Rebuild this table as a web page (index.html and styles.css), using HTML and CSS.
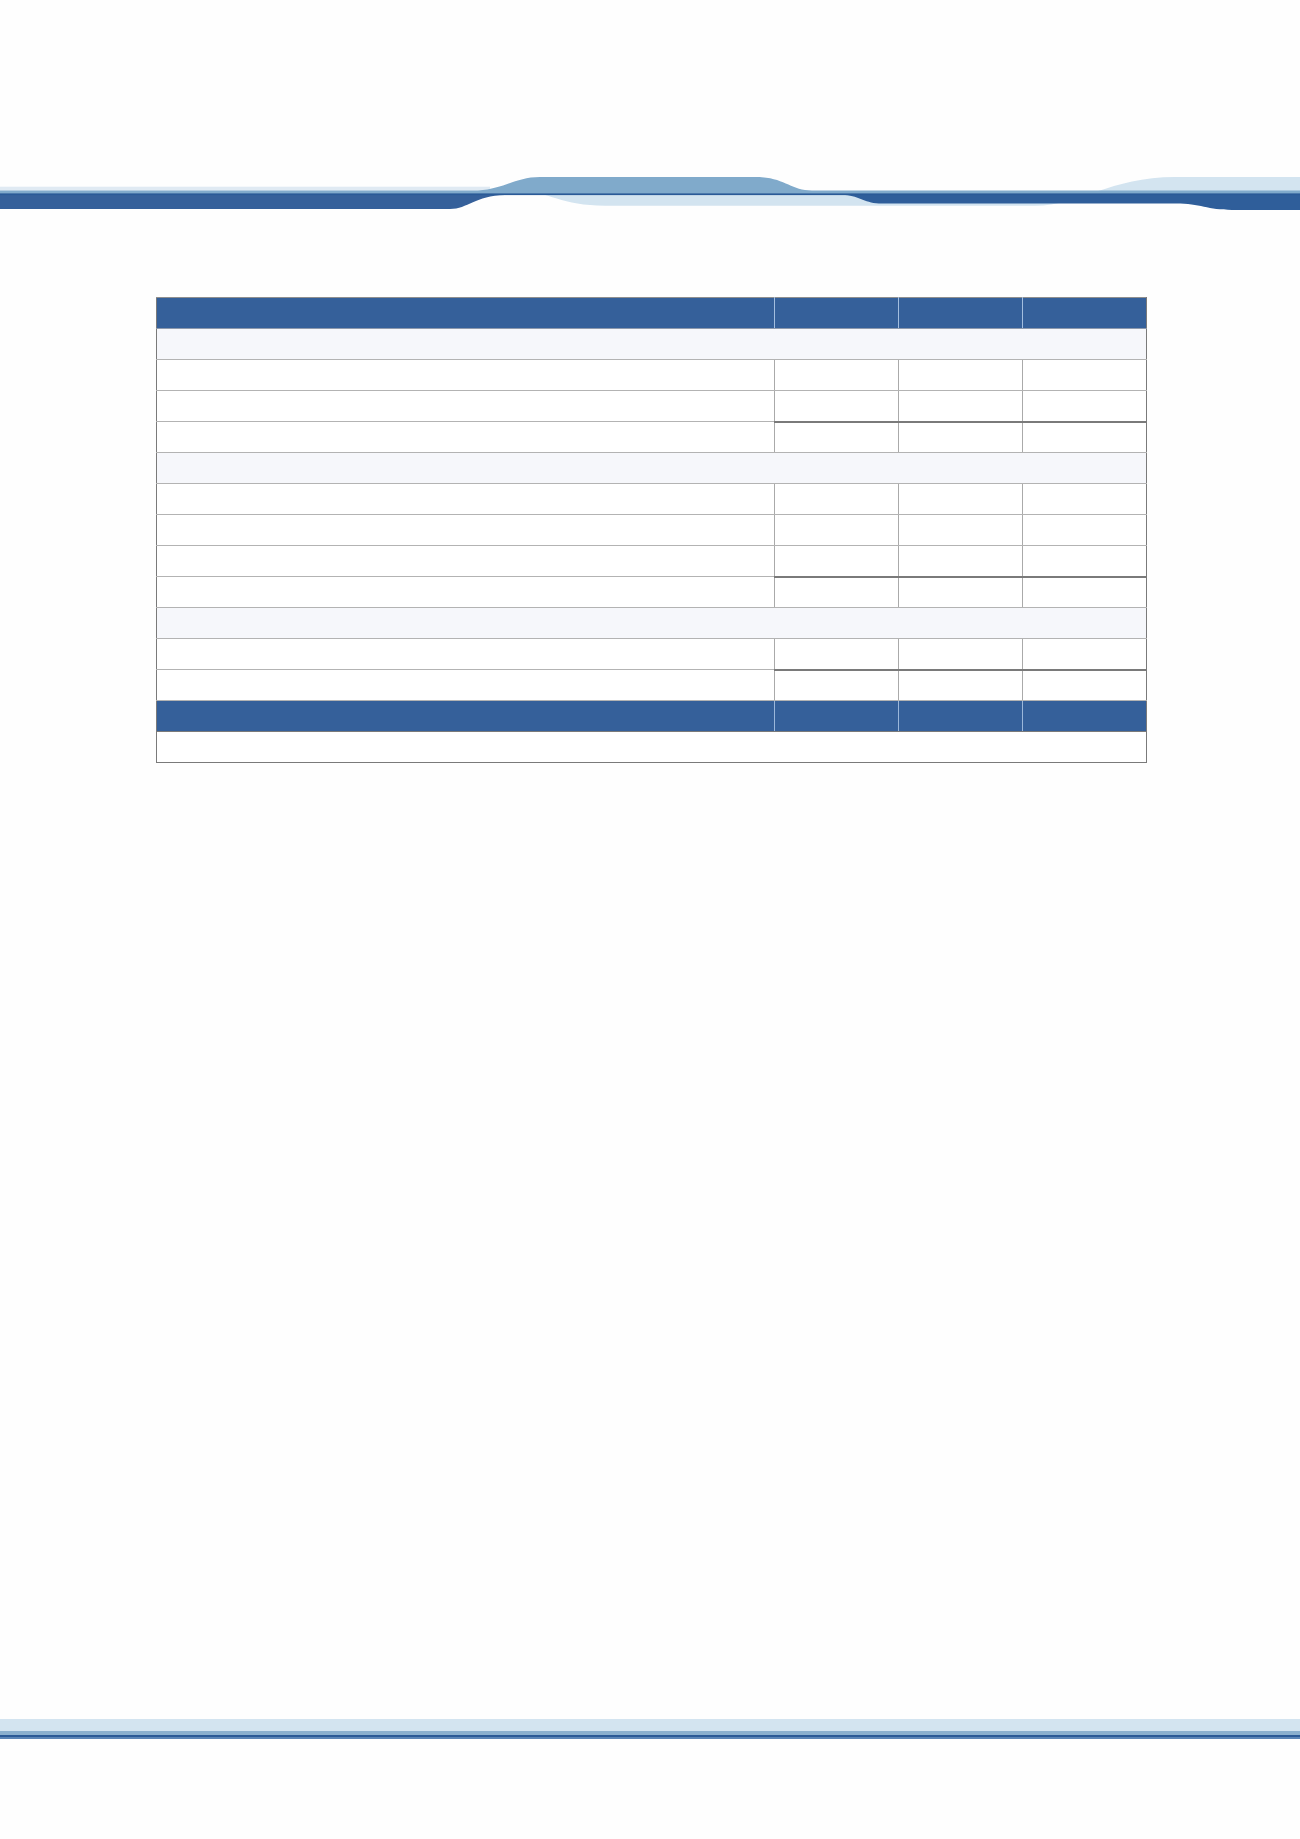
FILE: index.html
```html
<!DOCTYPE html>
<html lang="en">
<head>
<meta charset="utf-8">
<title>Report</title>
<link rel="stylesheet" href="styles.css">
</head>
<body>
<div class="page">
  <header class="masthead">
    <svg class="wave" viewBox="0 170 1300 50" width="1300" height="50" preserveAspectRatio="none">
      <rect x="0" y="186.7" width="490" height="4" fill="#e0eaf3"/>
      <path fill="#d3e4f0" d="M520 190 C548 192 562 205.7 605 205.7 L1035 205.7 C1080 205.7 1110 177 1175 177 L1300 177 L1300 194 L520 194 Z"/>
      <path fill="#80aacb" d="M0 190.5 L478 190.5 C505 189 515 177 540 177 L755 177 C785 177 790 190.5 812 190.5 L1300 190.5 L1300 194 L0 194 Z"/>
      <path fill="#35609a" d="M0 195 L505 195 C475 195.5 468 209 450 209 L0 209 Z"/>
      <path fill="#2f5e9a" d="M845 195 L1300 195 L1300 210 L1232 210 C1208 210 1200 203.6 1176 203.6 L882 203.6 C865 203.6 860 196 845 195 Z"/>
      <rect x="0" y="193.4" width="1300" height="1.7" fill="#2a5a97"/>
    </svg>
  </header>

  <main class="content">
    <table class="report">
      <colgroup>
        <col class="c-label"><col class="c-num"><col class="c-num"><col class="c-num">
      </colgroup>
      <thead>
        <tr class="head"><th></th><th></th><th></th><th></th></tr>
      </thead>
      <tbody>
        <tr class="section"><td colspan="4"></td></tr>
        <tr><td></td><td></td><td></td><td></td></tr>
        <tr><td></td><td></td><td></td><td></td></tr>
        <tr class="sum"><td></td><td></td><td></td><td></td></tr>
        <tr class="section"><td colspan="4"></td></tr>
        <tr><td></td><td></td><td></td><td></td></tr>
        <tr><td></td><td></td><td></td><td></td></tr>
        <tr><td></td><td></td><td></td><td></td></tr>
        <tr class="sum"><td></td><td></td><td></td><td></td></tr>
        <tr class="section"><td colspan="4"></td></tr>
        <tr><td></td><td></td><td></td><td></td></tr>
        <tr class="sum"><td></td><td></td><td></td><td></td></tr>
        <tr class="total"><td></td><td></td><td></td><td></td></tr>
        <tr class="note"><td colspan="4"></td></tr>
      </tbody>
    </table>
  </main>

  <footer class="footer">
    <div class="f-pale"></div>
    <div class="f-mid"></div>
    <div class="f-dark"></div>
    <div class="f-low"></div>
  </footer>
</div>
</body>
</html>
```

FILE: styles.css
```css
html, body {
  margin: 0;
  padding: 0;
  background: #fefefe;
  font-family: "Liberation Sans", Arial, sans-serif;
}

.page {
  width: 1300px;
  min-height: 1839px;
  display: flex;
  flex-direction: column;
}

.masthead {
  padding-top: 170px;
  height: 50px;
}

.wave {
  display: block;
  width: 1300px;
  height: 50px;
}

.content {
  padding: 77px 0 0 156px;
}

.report {
  border-collapse: collapse;
  width: 990px;
  table-layout: fixed;
  border: 1px solid #7a7a7a;
}

.c-label { width: 618px; }
.c-num { width: 124px; }

.report th,
.report td {
  height: 31px;
  padding: 0;
  box-sizing: border-box;
  border-top: 1px solid #b3b3b3;
  border-bottom: 1px solid #b3b3b3;
  border-left: 1px solid #aaaaaa;
  border-right: 1px solid #aaaaaa;
  background: #ffffff;
}

.report .head th {
  background: #35609a;
  border-top: 1px solid #8f8f8f;
  border-bottom: 1px solid #8d99ad;
  border-left: 1px solid #a3bedf;
  border-right: 1px solid #a3bedf;
}

.report .head th:first-child { border-left: 1px solid #7a7a7a; }
.report .head th:last-child { border-right: 1px solid #7a7a7a; }

.report .section td {
  background: #f6f7fb;
}

.report .sum td:not(:first-child) {
  border-top: 2px solid #7a7a7a;
}

.report .total td {
  background: #35609a;
  border-top: 1px solid #7a7a7a;
  border-bottom: 1px solid #7a7a7a;
  border-left: 1px solid #9bb7da;
  border-right: 1px solid #9bb7da;
}

.report .total td:first-child { border-left: 1px solid #7a7a7a; }
.report .total td:last-child { border-right: 1px solid #7a7a7a; }

.report .note td {
  border-bottom: 1px solid #7a7a7a;
}

.report td:first-child,
.report th:first-child { border-left-color: #7a7a7a; }
.report td:last-child,
.report th:last-child { border-right-color: #7a7a7a; }

.footer {
  margin-top: auto;
  margin-bottom: 100px;
  display: flex;
  flex-direction: column;
}

.f-pale { height: 12px; background: #d3e4f0; }
.f-mid { height: 4px; background: #8bb0ce; }
.f-dark { height: 2px; background: #2b5a96; }
.f-low { height: 2px; background: #5b85b6; }
```
